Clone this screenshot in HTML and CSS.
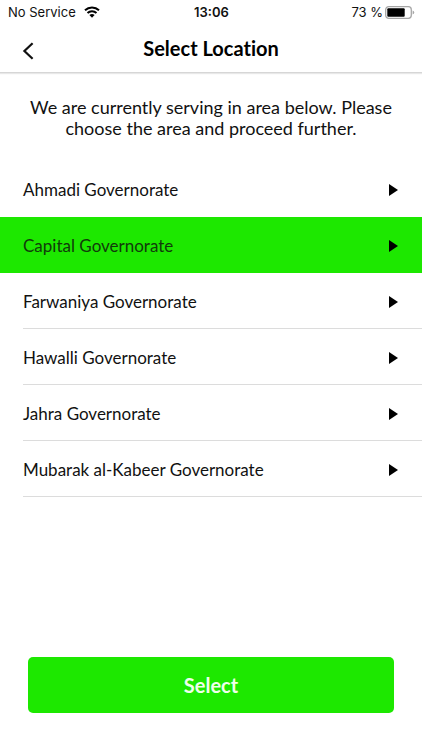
FILE: index.html
```html
<!DOCTYPE html>
<html lang="en">
<head>
<meta charset="utf-8">
<meta name="viewport" content="width=device-width, initial-scale=1">
<title>Select Location</title>
<link rel="stylesheet" href="styles.css">
</head>
<body>
<div class="screen">
  <div class="status">
    <div class="status-left">
      <span>No Service</span>
      <svg class="wifi" viewBox="0 0 16 12" aria-hidden="true">
        <path d="M1 4.2a10.2 10.2 0 0 1 14 0M3.5 7a6.6 6.6 0 0 1 9 0" fill="none" stroke="#000" stroke-width="2"/>
        <path d="M8 11.8 5.4 9.1a3.8 3.8 0 0 1 5.2 0z"/>
      </svg>
    </div>
    <span class="time">13:06</span>
    <div class="status-right">
      <span>73 %</span>
      <svg class="battery" viewBox="0 0 30 13" aria-hidden="true">
        <rect x="0.7" y="0.7" width="25.6" height="11.6" rx="3" fill="#fff" stroke="#a6a6a6" stroke-width="1.3"/>
        <rect x="2.3" y="2.3" width="17.4" height="8.4" rx="1"/>
        <path d="M27.6 4.4q1.6.5 1.6 2.1t-1.6 2.1z" fill="#a6a6a6"/>
      </svg>
    </div>
  </div>
  <header class="header">
    <button class="back" type="button" aria-label="Back">
      <svg viewBox="0 0 12 18" aria-hidden="true"><path d="M10.6 1.2 2.4 9l8.2 7.8" fill="none" stroke="#111" stroke-width="2.2"/></svg>
    </button>
    <h1>Select Location</h1>
  </header>
  <main>
    <p class="intro">We are currently serving in area below. Please choose the area and proceed further.</p>
    <ul class="areas">
      <li><button type="button"><span>Ahmadi Governorate</span></button></li>
      <li class="selected"><button type="button" aria-pressed="true"><span>Capital Governorate</span></button></li>
      <li><button type="button"><span>Farwaniya Governorate</span></button></li>
      <li><button type="button"><span>Hawalli Governorate</span></button></li>
      <li><button type="button"><span>Jahra Governorate</span></button></li>
      <li><button type="button"><span>Mubarak al-Kabeer Governorate</span></button></li>
    </ul>
  </main>
  <footer>
    <button class="select" type="button">Select</button>
  </footer>
</div>
</body>
</html>
```
FILE: styles.css
```css
* { box-sizing: border-box; }

body {
  margin: 0;
  background: #fff;
  color: #111;
  font-family: Lato, "Liberation Sans", sans-serif;
  font-variant-ligatures: none;
}

button {
  margin: 0;
  padding: 0;
  border: 0;
  background: none;
  color: inherit;
  font: inherit;
}

.screen {
  display: flex;
  flex-direction: column;
  min-height: 100vh;
}

.status {
  display: grid;
  grid-template-columns: 1fr auto 1fr;
  align-items: center;
  height: 24px;
  padding: 0 7px 0 8px;
  font: 13px/24px Inter, "Liberation Sans", sans-serif;
}

.status-left,
.status-right {
  display: flex;
  align-items: center;
}

.status-left { gap: 8px; }
.status-right { gap: 2px; justify-content: flex-end; }
.time { font-weight: 600; }
.wifi { width: 16px; height: 12px; }
.battery { width: 30px; height: 13px; }

.header {
  display: grid;
  grid-template-columns: 44px 1fr 44px;
  align-items: center;
  height: 49px;
  padding: 0 8px;
  border-bottom: 1px solid #d6d6d6;
  box-shadow: 0 1px 1px #e8e8e8;
}

.back {
  height: 44px;
  padding: 6px 0 0 14px;
  text-align: left;
}

.back svg {
  display: block;
  width: 12px;
  height: 18px;
}

h1 {
  margin: 0;
  font-size: 20px;
  line-height: 24px;
  font-weight: 700;
  text-align: center;
  color: #000;
}

.intro {
  margin: 0;
  padding: 24px 24px 22px;
  font-size: 18px;
  line-height: 21px;
  text-align: center;
}

.areas {
  margin: 0;
  padding: 0;
  list-style: none;
  font-size: 17px;
}

.areas li { padding-left: 23px; }

.areas button {
  display: flex;
  align-items: center;
  justify-content: space-between;
  width: 100%;
  height: 56px;
  padding: 2px 24px 0 0;
  border-bottom: 1px solid #dcdcdc;
  text-align: left;
}

.areas button::after {
  content: "";
  border: solid transparent;
  border-width: 6px 0 6px 9px;
  border-left-color: #000;
}

.areas .selected { background: #1de800; color: #113b0b; }
.areas .selected button,
.areas li:first-child button { border-color: transparent; }

footer {
  margin-top: auto;
  padding: 24px 28px 37px;
}

.select {
  width: 100%;
  height: 56px;
  border-radius: 5px;
  background: #1de800;
  color: #efffec;
  font-size: 20px;
  font-weight: 700;
}
```
